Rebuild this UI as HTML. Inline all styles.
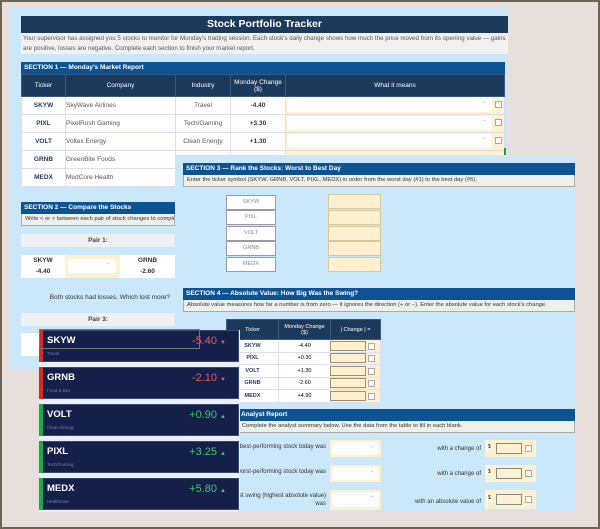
<!DOCTYPE html>
<html><head><meta charset="utf-8"><style>
*{margin:0;padding:0;box-sizing:border-box}
body{width:600px;height:529px;background:#e6dfdb;font-family:"Liberation Sans",Arial,sans-serif;position:relative;overflow:hidden}
.a{position:absolute}
.p{background:#cbe8fb}
.sec{background:#0d5394;color:#fff;font-size:6.5px;font-weight:bold;padding-left:3px;line-height:12px;border-bottom:1px solid #111}
.ins{background:#efefec;color:#333;font-size:5.8px;padding-left:3px;line-height:11px;border:1px solid #aaa;border-top:none}
table{border-collapse:collapse;font-size:6.5px}
td,th{border:1px solid #dde;text-align:center}
th{background:#1c3a5c;color:#fff;font-weight:normal;border-color:#3a5a7c}
.w{background:#fff}
.dd{background:#fff;border-radius:3px;position:absolute}
.dd:after{content:"⌄";position:absolute;right:5px;top:0;font-size:6px;color:#aaa}
.cb{width:7px;height:7px;border:1px solid #aaa;background:#fff;position:absolute}
.card{position:absolute;left:39px;width:200px;height:32px;background:#15204a;border:1px solid #3a4a70}
.card b{position:absolute;left:7px;top:4px;color:#fff;font-size:9.5px}
.card i{position:absolute;left:7px;top:20px;color:#6f7fa8;font-size:4.5px;font-style:normal}
.card span{position:absolute;right:12px;top:4px;font-size:11px}
.r span{color:#e55a5a}.g span{color:#3fc46f}
.card:before{content:"";position:absolute;left:-1px;top:-1px;bottom:-1px;width:4px}
.r:before{background:#d42a2a}.g:before{background:#1ea84a}
.tk{position:absolute;left:226px;width:50px;height:15px;background:#fff;border:1px solid #99a;color:#888;font-size:5.5px;text-align:center;line-height:13px}
.cr{position:absolute;left:328px;width:53px;height:15px;background:#fff1cf;border:1px solid #d8c8a0}
</style></head><body>
<!-- panel 1 -->
<div class="a p" style="left:10px;top:7px;width:498px;height:363px"></div>
<div class="a" style="left:21px;top:16px;width:487px;height:17px;background:#1b3a5c;color:#fff;font-weight:bold;font-size:10.5px;text-align:center;line-height:17px">Stock Portfolio Tracker</div>
<div class="a" style="left:21px;top:33px;width:487px;height:21px;background:#f1f1f1;color:#555;font-size:6.2px;line-height:9.5px;padding:1px 2px">Your supervisor has assigned you 5 stocks to monitor for Monday's trading session. Each stock's daily change shows how much the price moved from its opening value — gains are positive, losses are negative. Complete each section to finish your market report.</div>
<div class="a sec" style="left:21px;top:62px;width:484px">SECTION 1 — Monday's Market Report</div>
<table class="a" style="left:21px;top:74px;width:484px">
<tr style="height:22px"><th style="width:44px">Ticker</th><th style="width:110px">Company</th><th style="width:55px">Industry</th><th style="width:55px">Monday Change<br>($)</th><th>What it means</th></tr>
<tr class="w" style="height:18px"><td style="color:#1c3a5c;font-weight:bold">SKYW</td><td style="text-align:left;color:#555">SkyWave Airlines</td><td style="color:#555">Travel</td><td style="font-weight:bold;color:#333">-4.40</td><td style="background:#fff1cf"></td></tr>
<tr class="w" style="height:18px"><td style="color:#1c3a5c;font-weight:bold">PIXL</td><td style="text-align:left;color:#555">PixelRush Gaming</td><td style="color:#555">Tech/Gaming</td><td style="font-weight:bold;color:#333">+3.30</td><td style="background:#fff1cf"></td></tr>
<tr class="w" style="height:18px"><td style="color:#1c3a5c;font-weight:bold">VOLT</td><td style="text-align:left;color:#555">Voltex Energy</td><td style="color:#555">Clean Energy</td><td style="font-weight:bold;color:#333">+1.30</td><td style="background:#fff1cf"></td></tr>
<tr class="w" style="height:18px"><td style="color:#1c3a5c;font-weight:bold">GRNB</td><td style="text-align:left;color:#555">GreenBite Foods</td><td></td><td></td><td style="background:#fff1cf"></td></tr>
<tr class="w" style="height:18px"><td style="color:#1c3a5c;font-weight:bold">MEDX</td><td style="text-align:left;color:#555">MedCore Health</td><td></td><td></td><td style="background:#fff1cf"></td></tr>
</table>
<div class="dd" style="left:287px;top:98px;width:205px;height:14px"></div><div class="cb" style="left:495px;top:101px"></div>
<div class="dd" style="left:287px;top:116px;width:205px;height:14px"></div><div class="cb" style="left:495px;top:119px"></div>
<div class="dd" style="left:287px;top:134px;width:205px;height:14px"></div><div class="cb" style="left:495px;top:137px"></div>
<div class="a" style="left:504px;top:148px;width:2px;height:10px;background:#2a9a3a"></div>
<div class="a sec" style="left:21px;top:202px;width:154px">SECTION 2 — Compare the Stocks</div>
<div class="a ins" style="left:21px;top:214px;width:154px;white-space:nowrap;overflow:hidden">Write &lt; or &gt; between each pair of stock changes to complete</div>
<div class="a" style="left:21px;top:234px;width:154px;height:13px;background:#eef0f2;color:#444;font-weight:bold;font-size:6.5px;text-align:center;line-height:13px">Pair 1:</div>
<div class="a w" style="left:21px;top:255px;width:44px;height:23px;font-size:6.5px;text-align:center;color:#333;font-weight:bold;line-height:11px;background:#fff">SKYW<br>-4.40</div>
<div class="a" style="left:65px;top:255px;width:55px;height:23px;background:#fff1cf"></div>
<div class="dd" style="left:68px;top:259px;width:48px;height:14px"></div>
<div class="a" style="left:120px;top:255px;width:55px;height:23px;font-size:6.5px;text-align:center;color:#333;font-weight:bold;line-height:11px;background:#fff">GRNB<br>-2.60</div>
<div class="a" style="left:21px;top:294px;width:154px;font-size:6.5px;color:#333;text-align:right;padding-right:5px">Both stocks had losses. Which lost more?</div>
<div class="a" style="left:21px;top:313px;width:154px;height:13px;background:#eef0f2;color:#444;font-weight:bold;font-size:6.5px;text-align:center;line-height:13px">Pair 3:</div>
<div class="a" style="left:21px;top:333px;width:44px;height:23px;background:#fff"></div>
<!-- panel 2 -->
<div class="a p" style="left:175px;top:155px;width:400px;height:357px"></div>
<div class="a sec" style="left:183px;top:163px;width:392px">SECTION 3 — Rank the Stocks: Worst to Best Day</div>
<div class="a ins" style="left:183px;top:175px;width:392px">Enter the ticker symbol (SKYW, GRNB, VOLT, PIXL, MEDX) in order from the worst day (#1) to the best day (#5).</div>
<div class="tk" style="top:195px">SKYW</div><div class="tk" style="top:210px">PIXL</div><div class="tk" style="top:226px">VOLT</div><div class="tk" style="top:241px">GRNB</div><div class="tk" style="top:257px">MEDX</div>
<div class="cr" style="top:194px"></div><div class="cr" style="top:210px"></div><div class="cr" style="top:226px"></div><div class="cr" style="top:241px"></div><div class="cr" style="top:257px"></div>
<div class="a sec" style="left:183px;top:288px;width:392px">SECTION 4 — Absolute Value: How Big Was the Swing?</div>
<div class="a ins" style="left:183px;top:300px;width:392px">Absolute value measures how far a number is from zero — it ignores the direction (+ or −). Enter the absolute value for each stock's change.</div>
<table class="a" style="left:226px;top:319px;width:155px;font-size:5.5px">
<tr style="height:20px"><th style="width:52px">Ticker</th><th style="width:52px">Monday Change<br>($)</th><th>| Change | =</th></tr>
<tr class="w" style="height:12.5px"><td style="font-weight:bold;color:#1c3a5c">SKYW</td><td>-4.40</td><td style="background:#fff1cf"></td></tr>
<tr class="w" style="height:12.5px"><td style="font-weight:bold;color:#1c3a5c">PIXL</td><td>+0.30</td><td style="background:#fff1cf"></td></tr>
<tr class="w" style="height:12.5px"><td style="font-weight:bold;color:#1c3a5c">VOLT</td><td>+1.30</td><td style="background:#fff1cf"></td></tr>
<tr class="w" style="height:12.5px"><td style="font-weight:bold;color:#1c3a5c">GRNB</td><td>-2.60</td><td style="background:#fff1cf"></td></tr>
<tr class="w" style="height:12.5px"><td style="font-weight:bold;color:#1c3a5c">MEDX</td><td>+4.90</td><td style="background:#fff1cf"></td></tr>
</table>
<div class="a" style="left:330px;top:341px;width:36px;height:10px;border:1px solid #a09070;background:#fff1cf"></div><div class="cb" style="left:368px;top:343px"></div>
<div class="a" style="left:330px;top:353px;width:36px;height:10px;border:1px solid #a09070;background:#fff1cf"></div><div class="cb" style="left:368px;top:355px"></div>
<div class="a" style="left:330px;top:366px;width:36px;height:10px;border:1px solid #a09070;background:#fff1cf"></div><div class="cb" style="left:368px;top:368px"></div>
<div class="a" style="left:330px;top:378px;width:36px;height:10px;border:1px solid #a09070;background:#fff1cf"></div><div class="cb" style="left:368px;top:380px"></div>
<div class="a" style="left:330px;top:391px;width:36px;height:10px;border:1px solid #a09070;background:#fff1cf"></div><div class="cb" style="left:368px;top:393px"></div>
<div class="a sec" style="left:183px;top:409px;width:392px;padding-left:58px">Analyst Report</div>
<div class="a ins" style="left:183px;top:421px;width:392px;padding-left:58px">Complete the analyst summary below. Use the data from the table to fill in each blank.</div>
<div class="a" style="left:200px;top:444px;width:126px;font-size:6px;color:#333;text-align:right">The best-performing stock today was</div>
<div class="a" style="left:200px;top:469px;width:126px;font-size:6px;color:#333;text-align:right">The worst-performing stock today was</div>
<div class="a" style="left:200px;top:492px;width:126px;font-size:6px;color:#333;text-align:right;line-height:8px">The biggest swing (highest absolute value) was</div>
<div class="a" style="left:330px;top:440px;width:51px;height:17px;background:#fff1cf"></div><div class="dd" style="left:332px;top:442px;width:47px;height:13px"></div>
<div class="a" style="left:330px;top:465px;width:51px;height:17px;background:#fff1cf"></div><div class="dd" style="left:332px;top:467px;width:47px;height:13px"></div>
<div class="a" style="left:330px;top:490px;width:51px;height:20px;background:#fff1cf"></div><div class="dd" style="left:332px;top:492px;width:47px;height:15px"></div>
<div class="a" style="left:400px;top:446px;width:81px;font-size:6px;color:#333;text-align:right">with a change of</div>
<div class="a" style="left:400px;top:471px;width:81px;font-size:6px;color:#333;text-align:right">with a change of</div>
<div class="a" style="left:380px;top:499px;width:101px;font-size:6px;color:#333;text-align:right">with an absolute value of</div>
<div class="a" style="left:485px;top:440px;width:51px;height:17px;background:#fff1cf"><div class="a" style="left:2px;top:4px;font-size:5px;background:#fff;padding:0 1px">$</div><div class="a" style="left:11px;top:3px;width:26px;height:11px;border:1px solid #888;background:#fff1cf"></div><div class="cb" style="left:40px;top:5px"></div></div>
<div class="a" style="left:485px;top:465px;width:51px;height:17px;background:#fff1cf"><div class="a" style="left:2px;top:4px;font-size:5px;background:#fff;padding:0 1px">$</div><div class="a" style="left:11px;top:3px;width:26px;height:11px;border:1px solid #888;background:#fff1cf"></div><div class="cb" style="left:40px;top:5px"></div></div>
<div class="a" style="left:485px;top:490px;width:51px;height:19px;background:#fff1cf"><div class="a" style="left:2px;top:5px;font-size:5px;background:#fff;padding:0 1px">$</div><div class="a" style="left:11px;top:4px;width:26px;height:11px;border:1px solid #888;background:#fff1cf"></div><div class="cb" style="left:40px;top:6px"></div></div>
<!-- cards -->
<div class="a" style="left:39px;top:330px;width:201px;height:182px;background:#e9eff6"></div>
<div class="card r" style="top:330px"><b>SKYW</b><i>Travel</i><span>-5.40 <small style="font-size:6px">▼</small></span></div>
<div class="card r" style="top:367px"><b>GRNB</b><i>Food &amp; Bev</i><span>-2.10 <small style="font-size:6px">▼</small></span></div>
<div class="card g" style="top:404px"><b>VOLT</b><i>Clean Energy</i><span>+0.90 <small style="font-size:6px">▲</small></span></div>
<div class="card g" style="top:441px"><b>PIXL</b><i>Tech/Gaming</i><span>+3.25 <small style="font-size:6px">▲</small></span></div>
<div class="card g" style="top:478px"><b>MEDX</b><i>Healthcare</i><span>+5.80 <small style="font-size:6px">▲</small></span></div>
<div class="a" style="left:39px;top:329px;width:161px;height:20px;border:1px solid #777"></div>
<div class="a" style="left:0;top:0;width:600px;height:529px;border:2px solid #6e6450;pointer-events:none"></div>
</body></html>
